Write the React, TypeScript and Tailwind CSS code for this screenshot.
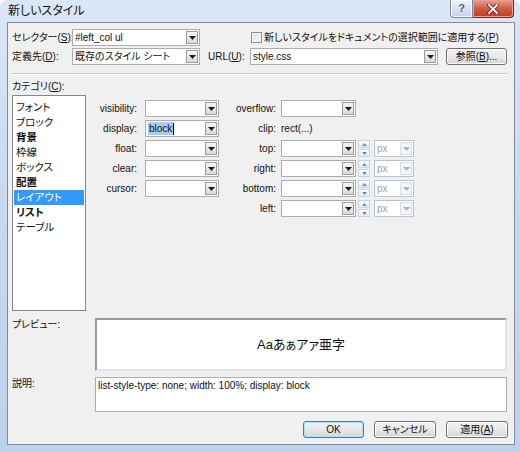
import clsx from "clsx";

const font = "font-['Liberation_Sans','Noto_Sans_CJK_JP',sans-serif] [font-feature-settings:'palt']";

function Arrow({ disabled }: { disabled?: boolean }) {
  return (
    <svg width="7" height="4" viewBox="0 0 7 4">
      <polygon points="0,0 7,0 3.5,4" fill={disabled ? "#a8b4c2" : "#1e1e1e"} />
    </svg>
  );
}

function Combo({
  w,
  value,
  highlight,
  disabled,
}: {
  w: string;
  value?: string;
  highlight?: boolean;
  disabled?: boolean;
}) {
  return (
    <div
      className={clsx(
        "flex h-[17px] shrink-0 items-center border bg-white",
        w,
        disabled ? "border-[#b4c5d8] bg-[#f7f8fa]" : "border-[#abadb3]"
      )}
    >
      <div className={clsx("flex flex-1 items-center overflow-hidden whitespace-nowrap pl-[2px] leading-[13px]", disabled && "text-[#a0a0a0]")}>
        {highlight ? (
          <>
            <span className="bg-[#a6cdf2] px-[1px]">{value}</span>
            <span className="h-[12px] w-[1px] bg-black" />
          </>
        ) : (
          value
        )}
      </div>
      <div
        className={clsx(
          "mr-[1px] flex h-[13px] w-[12px] shrink-0 items-center justify-center border",
          disabled
            ? "border-[#d5dde6] bg-[#f4f6f8]"
            : "border-[#9b9b9b] bg-linear-to-b from-[#f6f6f6] to-[#d9d9d9]"
        )}
      >
        <Arrow disabled={disabled} />
      </div>
    </div>
  );
}

function Spinner() {
  return (
    <div className="ml-[2px] flex h-[17px] w-[12px] shrink-0 flex-col gap-[1px]">
      {[0, 1].map((i) => (
        <div key={i} className="flex flex-1 items-center justify-center border border-[#c9d2dd] bg-linear-to-b from-[#fbfbfb] to-[#eaedf1]">
          <svg width="5" height="3" viewBox="0 0 5 3">
            <polygon points={i === 0 ? "0,3 5,3 2.5,0" : "0,0 5,0 2.5,3"} fill="#6a8cc0" />
          </svg>
        </div>
      ))}
    </div>
  );
}

function Button({ children, primary, w }: { children: React.ReactNode; primary?: boolean; w: string }) {
  return (
    <div
      className={clsx(
        "flex h-[17px] shrink-0 items-center justify-center whitespace-nowrap rounded-[3px] border bg-linear-to-b from-[#f3f3f3] via-[#e8e8e8] to-[#d6d6d6]",
        w,
        primary ? "border-[#3c7fb1] shadow-[inset_0_0_0_1px_#b6def5]" : "border-[#707070] shadow-[inset_0_0_0_1px_#fcfcfc]"
      )}
    >
      {children}
    </div>
  );
}

const categories = [
  { name: "フォント" },
  { name: "ブロック" },
  { name: "背景", bold: true },
  { name: "枠線" },
  { name: "ボックス" },
  { name: "配置", bold: true },
  { name: "レイアウト", selected: true },
  { name: "リスト", bold: true },
  { name: "テーブル" },
];

const leftProps = [
  { label: "visibility:" },
  { label: "display:", value: "block", highlight: true },
  { label: "float:" },
  { label: "clear:" },
  { label: "cursor:" },
];

const offsets = ["top:", "right:", "bottom:", "left:"];

export default function App() {
  return (
    <div className={clsx("flex h-[452px] w-[520px] flex-col rounded-t-[7px] bg-linear-to-b from-[#dbe7f5] via-[#c6d8ee] to-[#bcd2ec] text-[10px] text-[#111]", font)}>
      {/* title bar */}
      <div className="flex h-[22px] shrink-0 items-start">
        <div className="pl-[8px] pt-[3px] text-[12px] leading-[16px]">新しいスタイル</div>
        <div className="ml-auto mr-[6px] flex">
          <div className="flex h-[18px] w-[23px] items-center justify-center rounded-bl-[4px] border border-t-0 border-[#7b8aa0] bg-linear-to-b from-[#eef3fa] to-[#c5d3e5] text-[11px] font-bold leading-none text-[#5d6878] shadow-[inset_0_0_0_1px_#f6f9fd]">
            ?
          </div>
          <div className="flex h-[18px] w-[41px] items-center justify-center rounded-br-[4px] border border-l-0 border-t-0 border-[#6a2b22] bg-linear-to-b from-[#e6a090] via-[#cf5a45] to-[#c03a26] shadow-[inset_0_0_0_1px_#ee9f90]">
            <svg width="12" height="10" viewBox="0 0 12 10">
              <path d="M2 1 L10 9 M10 1 L2 9" stroke="#5a2018" strokeWidth="3.4" strokeLinecap="square" />
              <path d="M2 1 L10 9 M10 1 L2 9" stroke="#ffffff" strokeWidth="1.8" strokeLinecap="square" />
            </svg>
          </div>
        </div>
      </div>

      {/* client area */}
      <div className="mb-[7px] ml-[7px] mr-[5px] flex flex-1 flex-col border border-[#7f8c9c] bg-[#f0f0f0] pl-[4px] pr-[6px] pt-[6px]">
        {/* row 1 */}
        <div className="flex h-[17px] items-center">
          <div className="w-[60px] shrink-0 whitespace-nowrap">
            セレクター(<span className="underline">S</span>):
          </div>
          <Combo w="w-[128px]" value="#left_col ul" />
          <div className="ml-[51px] h-[11px] w-[11px] shrink-0 border border-[#8f8f8f] bg-linear-to-br from-[#dcdcdc] to-[#fbfbfb] shadow-[inset_0_0_0_1px_#f4f4f4]" />
          <div className="ml-[2px] whitespace-nowrap">
            新しいスタイルをドキュメントの選択範囲に適用する(<span className="underline">P</span>)
          </div>
        </div>

        {/* row 2 */}
        <div className="mt-[2px] flex h-[17px] items-center">
          <div className="w-[60px] shrink-0 whitespace-nowrap">
            定義先(<span className="underline">D</span>):
          </div>
          <Combo w="w-[128px]" value="既存のスタイル シート" />
          <div className="ml-[8px] w-[42px] shrink-0 whitespace-nowrap">
            URL(<span className="underline">U</span>):
          </div>
          <Combo w="w-[188px]" value="style.css" />
          <div className="ml-[8px]">
            <Button w="w-[61px]">
              参照(<span className="underline">B</span>)...
            </Button>
          </div>
        </div>

        {/* separator */}
        <div className="mt-[8px] h-[2px] w-[495px] border-t border-b border-t-[#c9c9c9] border-b-white" />

        <div className="mt-[5px] leading-[14px]">
          カテゴリ(<span className="underline">C</span>):
        </div>

        {/* category list + properties */}
        <div className="mt-[1px] flex">
          <div className="flex h-[216px] w-[74px] shrink-0 flex-col border border-[#828790] bg-white p-[1px] pt-[4px]">
            {categories.map((c) => (
              <div
                key={c.name}
                className={clsx(
                  "h-[15px] whitespace-nowrap pl-[2px] text-[10.5px] leading-[15px]",
                  c.bold && "font-bold",
                  c.selected && "bg-[#3399ff] text-white"
                )}
              >
                {c.name}
              </div>
            ))}
          </div>

          <div className="mt-[5px] flex flex-col gap-[3px]">
            {leftProps.map((p) => (
              <div key={p.label} className="flex h-[17px] items-center">
                <div className="w-[51px] shrink-0 text-right">{p.label}</div>
                <div className="ml-[8px]">
                  <Combo w="w-[74px]" value={p.value} highlight={p.highlight} />
                </div>
              </div>
            ))}
          </div>

          <div className="mt-[5px] flex flex-col gap-[3px]">
            <div className="flex h-[17px] items-center">
              <div className="w-[57px] shrink-0 text-right">overflow:</div>
              <div className="ml-[5px]">
                <Combo w="w-[75px]" />
              </div>
            </div>
            <div className="flex h-[17px] items-center">
              <div className="w-[57px] shrink-0 text-right">clip:</div>
              <div className="ml-[5px]">rect(...)</div>
            </div>
            {offsets.map((o) => (
              <div key={o} className="flex h-[17px] items-center">
                <div className="w-[57px] shrink-0 text-right">{o}</div>
                <div className="ml-[5px]">
                  <Combo w="w-[75px]" />
                </div>
                <Spinner />
                <div className="ml-[4px]">
                  <Combo w="w-[40px]" value="px" disabled />
                </div>
              </div>
            ))}
          </div>
        </div>

        {/* preview */}
        <div className="mt-[7px] flex">
          <div className="w-[83px] shrink-0 leading-[14px]">プレビュー:</div>
          <div className="flex h-[53px] w-[412px] items-center justify-center border-2 border-b-[#e3e3e3] border-l-[#9a9a9a] border-r-[#e3e3e3] border-t-[#9a9a9a] bg-white text-[13px]">
            Aaあぁアァ亜字
          </div>
        </div>

        {/* description */}
        <div className="mt-[6px] flex">
          <div className="w-[83px] shrink-0 leading-[14px]">説明:</div>
          <div className="h-[35px] w-[412px] border border-[#abadb3] bg-white px-[2px] pt-[1px] leading-[14px]">
            list-style-type: none; width: 100%; display: block
          </div>
        </div>

        {/* buttons */}
        <div className="mt-[9px] flex justify-end gap-[10px]">
          <Button w="w-[61px]" primary>
            OK
          </Button>
          <Button w="w-[62px]">キャンセル</Button>
          <Button w="w-[62px]">
            適用(<span className="underline">A</span>)
          </Button>
        </div>
      </div>
    </div>
  );
}
